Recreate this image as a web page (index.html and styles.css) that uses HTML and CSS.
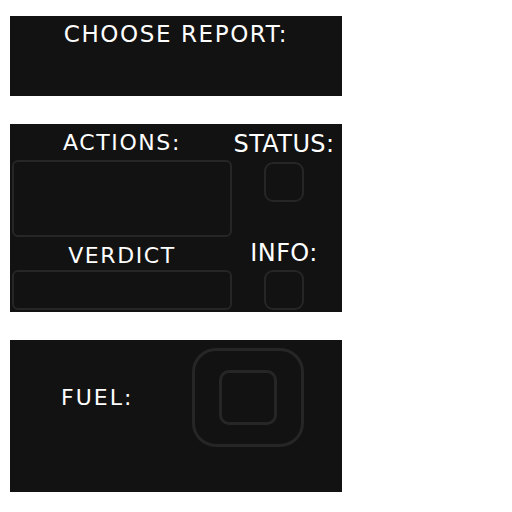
FILE: index.html
```html
<!DOCTYPE html>
<html lang="en">

<head>
  <meta charset="UTF-8" />
  <meta name="viewport" content="width=device-width, initial-scale=1.0" />
  <title>Report</title>
  <link rel="stylesheet" href="styles.css">
</head>

<body>
  <div class="panel report-panel">
    <h2 class="label">CHOOSE REPORT:</h2>
  </div>

  <div class="panel summary-panel">
    <div class="column main-column">
      <div class="label">ACTIONS:</div>
      <div class="box actions-box"></div>
      <div class="label verdict-label">VERDICT</div>
      <div class="box verdict-box"></div>
    </div>
    <div class="column side-column">
      <div class="label big">STATUS:</div>
      <div class="box square status-square"></div>
      <div class="label big info-label">INFO:</div>
      <div class="box square info-square"></div>
    </div>
  </div>

  <div class="panel fuel-panel">
    <div class="label fuel-label">FUEL:</div>
    <div class="gauge">
      <div class="gauge-inner"></div>
    </div>
  </div>
</body>

</html>
```

FILE: styles.css
```css
* {
  box-sizing: border-box;
}

body {
  margin: 0;
  padding: 16px 10px;
  background: #ffffff;
  font-family: 'DejaVu Sans', sans-serif;
  color: #ffffff;
}

.panel {
  width: 332px;
  background-color: #121212;
  margin-bottom: 28px;
}

.label {
  font-size: 22px;
  font-weight: normal;
  line-height: 1;
  letter-spacing: 1.6px;
  margin: 0;
  text-align: center;
}

.label.big {
  font-size: 24px;
  letter-spacing: 0.4px;
}

.report-panel {
  height: 80px;
  padding-top: 7px;
}

.report-panel .label {
  font-size: 23px;
}

.summary-panel {
  display: flex;
  padding: 8px 2px 2px;
}

.column {
  display: flex;
  flex-direction: column;
  align-items: center;
}

.main-column {
  width: 220px;
}

.side-column {
  flex: 1;
  padding-right: 4px;
}

.box {
  border: 2px solid #262626;
  border-radius: 6px;
}

.actions-box {
  width: 220px;
  height: 77px;
  margin-top: 6px;
}

.verdict-label {
  margin-top: 8px;
}

.verdict-box {
  width: 220px;
  height: 40px;
  margin-top: 3px;
}

.square {
  width: 40px;
  height: 40px;
  border-radius: 9px;
}

.status-square {
  margin-top: 6px;
}

.info-label {
  margin-top: 39px;
}

.info-square {
  margin-top: 5px;
}

.fuel-panel {
  height: 152px;
  display: flex;
  align-items: flex-start;
  padding: 8px 0 0 51px;
  gap: 59px;
}

.fuel-label {
  align-self: center;
  margin-top: -44px;
  letter-spacing: 2px;
}

.gauge {
  width: 112px;
  height: 99px;
  border: 3px solid #262626;
  border-radius: 24px;
  display: flex;
  align-items: center;
  justify-content: center;
}

.gauge-inner {
  width: 58px;
  height: 55px;
  border: 3px solid #262626;
  border-radius: 10px;
}
```
